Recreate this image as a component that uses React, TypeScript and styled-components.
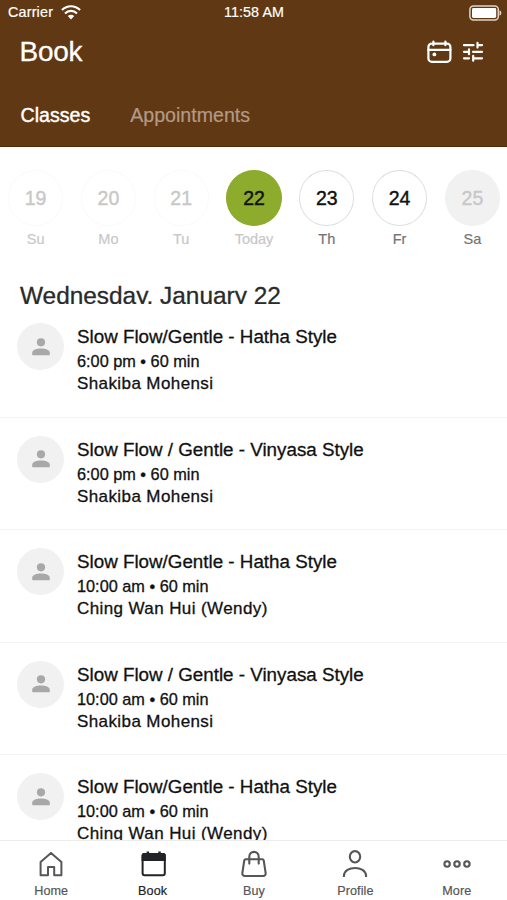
import React from "react";
import styled, { createGlobalStyle } from "styled-components";

const GlobalStyle = createGlobalStyle`
  * { box-sizing: border-box; }
  body { margin: 0; background: #fff; }
`;

const Screen = styled.div`
  width: 507px;
  height: 900px;
  display: flex;
  flex-direction: column;
  overflow: hidden;
  background: #fff;
  color: #111;
  font-family: "Liberation Sans", Arial, sans-serif;
  white-space: nowrap;
`;

const Header = styled.header`
  height: 147px;
  flex: none;
  background: #603813;
  border-bottom: 1px solid #4e2a0c;
  color: #fff;
`;

const StatusBar = styled.div`
  height: 25px;
  display: grid;
  grid-template-columns: 1fr auto 1fr;
  align-items: center;
  padding: 0 5px 0 8px;
  font-size: 14.3px;
  line-height: 25px;
  -webkit-text-stroke: 0.2px currentColor;
`;

const Carrier = styled.div`
  display: flex;
  align-items: center;
  gap: 8px;
  letter-spacing: 0.2px;
`;

const Clock = styled.div`
  padding-right: 2px;
  letter-spacing: 0.1px;
`;

const BatterySlot = styled.div`
  display: flex;
  justify-content: flex-end;
`;

const TitleBar = styled.div`
  height: 54px;
  display: flex;
  align-items: center;
  justify-content: space-between;
  padding: 0 23px 0 19.5px;
`;

const Title = styled.h1`
  margin: 0;
  font-size: 28px;
  line-height: 54px;
  font-weight: 400;
  letter-spacing: -0.3px;
  -webkit-text-stroke: 0.3px currentColor;
`;

const Actions = styled.div`
  display: flex;
  align-items: center;
  gap: 9px;
`;

const Tabs = styled.nav`
  display: flex;
  gap: 40px;
  padding: 24px 20px 0 20.5px;
`;

const Tab = styled.span<{ $active?: boolean }>`
  font-size: 19.6px;
  line-height: 25px;
  color: ${(p) => (p.$active ? "#fff" : "#b39a85")};
  -webkit-text-stroke: ${(p) => (p.$active ? "0.4px" : "0.2px")} currentColor;
`;

const DayStrip = styled.div`
  height: 128px;
  flex: none;
  display: grid;
  grid-template-columns: repeat(7, 72.8px);
  margin-left: -0.8px;
  padding-top: 23px;
`;

type DayState = "past" | "today" | "open" | "closed";

const dayStyles: Record<DayState, { bg: string; border: string; color: string; label: string }> = {
  past: { bg: "#fff", border: "#fafafa", color: "#c8c8c8", label: "#c8c8c8" },
  today: { bg: "#8dab2c", border: "#8dab2c", color: "#111", label: "#c8c8c8" },
  open: { bg: "#fff", border: "#dedede", color: "#111", label: "#747474" },
  closed: { bg: "#f1f1f1", border: "#f1f1f1", color: "#c8c8c8", label: "#747474" },
};

const Day = styled.div`
  display: flex;
  flex-direction: column;
  align-items: center;
`;

const DayNumber = styled.div<{ $state: DayState }>`
  width: 55.4px;
  height: 56px;
  display: flex;
  align-items: center;
  justify-content: center;
  border-radius: 50%;
  border: 1px solid ${(p) => dayStyles[p.$state].border};
  background: ${(p) => dayStyles[p.$state].bg};
  color: ${(p) => dayStyles[p.$state].color};
  font-size: 19.5px;
  -webkit-text-stroke: 0.4px currentColor;
`;

const DayLabel = styled.div<{ $state: DayState }>`
  margin-top: 4px;
  font-size: 14.5px;
  line-height: 18px;
  color: ${(p) => dayStyles[p.$state].label};
  -webkit-text-stroke: 0.2px currentColor;
`;

const DateHeading = styled.h2`
  height: 29px;
  flex: none;
  margin: 0 0 1px;
  padding: 5px 0 0 20px;
  overflow: hidden;
  font-size: 24.4px;
  line-height: 31px;
  font-weight: 400;
  color: #2a2a2a;
  -webkit-text-stroke: 0.3px currentColor;
`;

const ClassList = styled.main`
  flex: 1;
  min-height: 0;
  overflow: hidden;
`;

const ClassRow = styled.article`
  height: 112.5px;
  display: flex;
  gap: 13px;
  padding: 18.4px 17px 0;
  border-bottom: 1px solid #f3f3f3;
`;

const Avatar = styled.div`
  width: 47px;
  height: 47px;
  flex: none;
  display: flex;
  align-items: center;
  justify-content: center;
  border-radius: 50%;
  background: #f1f1f1;
`;

const ClassInfo = styled.div`
  display: flex;
  flex-direction: column;
  padding-top: 2px;
  color: #111;
  -webkit-text-stroke: 0.3px currentColor;
`;

const ClassName = styled.div`
  font-size: 18.8px;
  line-height: 24px;
`;

const ClassTime = styled.div`
  font-size: 16.3px;
  line-height: 24px;
`;

const Teacher = styled.div`
  font-size: 17px;
  line-height: 22px;
  letter-spacing: 0.4px;
`;

const BottomNav = styled.nav`
  height: 60px;
  flex: none;
  display: grid;
  grid-template-columns: repeat(5, 1fr);
  border-top: 1px solid #ececec;
  background: #fff;
`;

const NavItem = styled.div<{ $active?: boolean }>`
  display: flex;
  flex-direction: column;
  align-items: center;
  padding: 8px 0 0 1px;
  color: ${(p) => (p.$active ? "#222327" : "#555658")};
`;

const NavLabel = styled.span`
  margin-top: 4px;
  font-size: 12.6px;
  line-height: 16px;
  letter-spacing: 0.1px;
  -webkit-text-stroke: 0.2px currentColor;
`;

const WifiIcon = () => (
  <svg width="20" height="15" viewBox="0 0 20 15" fill="none" stroke="#fff" strokeWidth="2.1">
    <path d="M0.9 5.1C6.2-0.1 13.8-0.1 19.1 5.1" />
    <path d="M4 8.4C7.4 5 12.6 5 16 8.4" />
    <path d="M6.8 11.1Q10 8.2 13.2 11.1L10 14.4Z" fill="#fff" stroke="none" />
  </svg>
);

const BatteryIcon = () => (
  <svg width="33" height="16" viewBox="0 0 33 16">
    <rect x="0.9" y="0.9" width="28.4" height="14.2" rx="3.5" fill="none" stroke="#e3d3c5" strokeWidth="1.5" />
    <rect x="3" y="3" width="24.2" height="10" rx="1.4" fill="#fff" />
    <path d="M30.5 5.2Q32.4 6 32.4 8T30.5 10.8Z" fill="#e3d3c5" />
  </svg>
);

const CalendarIcon = () => (
  <svg width="26" height="24" viewBox="0.6 0 26 24" fill="none" stroke="#fff" strokeWidth="2.2" strokeLinecap="round">
    <rect x="2" y="3.6" width="22" height="18.2" rx="3.4" />
    <path d="M2 9.8H24M7 1.6V5.2M19 1.6V5.2" />
    <circle cx="8" cy="14.4" r="1.9" fill="#fff" stroke="none" />
  </svg>
);

const TuneIcon = () => (
  <svg width="22" height="22" viewBox="0 0 22 22" fill="none" stroke="#fff" strokeWidth="2.2" strokeLinecap="round">
    <path d="M2 4.2H11.5M15.5 1.8V6.6M16 4.2H20M2 10.8H5.5M7 8.4V13.2M11 10.8H20M2 17.3H7M11.2 14.9V19.7M12 17.3H20" />
  </svg>
);

const PersonIcon = () => (
  <svg width="20" height="20" viewBox="0 0 20 20" fill="#a8a8a8">
    <circle cx="10" cy="5.3" r="4.1" />
    <path d="M1.2 17.4V15.7C1.2 12.9 5.8 11.5 10 11.5S18.8 12.9 18.8 15.7V17.4Q18.8 18.2 18 18.2H2Q1.2 18.2 1.2 17.4Z" />
  </svg>
);

const HomeIcon = () => (
  <svg width="30" height="30" viewBox="0 0 30 30" fill="none" stroke="currentColor" strokeWidth="2" strokeLinejoin="round">
    <path d="M4.6 12.9L15 3.9L25.4 12.9V26.3H18.2V18H12V26.3H4.6Z" />
  </svg>
);

const BookIcon = () => (
  <svg width="30" height="30" viewBox="-0.6 0 30 30">
    <rect x="4" y="5" width="22.2" height="21.3" rx="2" fill="none" stroke="currentColor" strokeWidth="2" />
    <path d="M3 6.5Q3 4 5.5 4H8V2.5H10.5V4H19.7V2.5H22.2V4H24.7Q27.2 4 27.2 6.5V12H3Z" fill="currentColor" />
  </svg>
);

const BagIcon = () => (
  <svg width="30" height="30" viewBox="0 0 30 30" fill="none" stroke="currentColor" strokeWidth="2.1" strokeLinecap="round" strokeLinejoin="round">
    <path d="M6.7 10.2H23.3Q24.5 10.2 24.7 11.4L26.6 23.7Q27 27 24 27H6Q3 27 3.4 23.7L5.3 11.4Q5.5 10.2 6.7 10.2Z" />
    <path d="M10.3 14.6V7.8C10.3 1.2 19.7 1.2 19.7 7.8V14.6" />
  </svg>
);

const ProfileIcon = () => (
  <svg width="30" height="30" viewBox="0 0 30 30" fill="none" stroke="currentColor" strokeWidth="2.1">
    <ellipse cx="15" cy="7.8" rx="5.2" ry="5.7" />
    <path d="M3.9 27.9V26.8C4.4 16.4 25.6 16.4 26.1 26.8V27.9" />
  </svg>
);

const MoreIcon = () => (
  <svg width="30" height="30" viewBox="0 0 30 30" fill="none" stroke="currentColor" strokeWidth="2.1">
    <circle cx="5.1" cy="15" r="2.7" />
    <circle cx="15" cy="15" r="2.7" />
    <circle cx="24.9" cy="15" r="2.7" />
  </svg>
);

const days: { num: number; label: string; state: DayState }[] = [
  { num: 19, label: "Su", state: "past" },
  { num: 20, label: "Mo", state: "past" },
  { num: 21, label: "Tu", state: "past" },
  { num: 22, label: "Today", state: "today" },
  { num: 23, label: "Th", state: "open" },
  { num: 24, label: "Fr", state: "open" },
  { num: 25, label: "Sa", state: "closed" },
];

const HATHA = "Slow Flow/Gentle - Hatha Style";
const VINYASA = "Slow Flow / Gentle - Vinyasa Style";

const classes = [
  { name: HATHA, time: "6:00 pm", teacher: "Shakiba Mohensi" },
  { name: VINYASA, time: "6:00 pm", teacher: "Shakiba Mohensi" },
  { name: HATHA, time: "10:00 am", teacher: "Ching Wan Hui (Wendy)" },
  { name: VINYASA, time: "10:00 am", teacher: "Shakiba Mohensi" },
  { name: HATHA, time: "10:00 am", teacher: "Ching Wan Hui (Wendy)" },
];

const navItems = [
  { label: "Home", Icon: HomeIcon },
  { label: "Book", Icon: BookIcon, active: true },
  { label: "Buy", Icon: BagIcon },
  { label: "Profile", Icon: ProfileIcon },
  { label: "More", Icon: MoreIcon },
];

export default function App() {
  return (
    <>
      <GlobalStyle />
      <Screen>
        <Header>
          <StatusBar>
            <Carrier>
              Carrier
              <WifiIcon />
            </Carrier>
            <Clock>11:58 AM</Clock>
            <BatterySlot>
              <BatteryIcon />
            </BatterySlot>
          </StatusBar>
          <TitleBar>
            <Title>Book</Title>
            <Actions>
              <CalendarIcon />
              <TuneIcon />
            </Actions>
          </TitleBar>
          <Tabs>
            <Tab $active>Classes</Tab>
            <Tab>Appointments</Tab>
          </Tabs>
        </Header>
        <DayStrip>
          {days.map((d) => (
            <Day key={d.num}>
              <DayNumber $state={d.state}>{d.num}</DayNumber>
              <DayLabel $state={d.state}>{d.label}</DayLabel>
            </Day>
          ))}
        </DayStrip>
        <DateHeading>Wednesday, January 22</DateHeading>
        <ClassList>
          {classes.map((c, i) => (
            <ClassRow key={i}>
              <Avatar>
                <PersonIcon />
              </Avatar>
              <ClassInfo>
                <ClassName>{c.name}</ClassName>
                <ClassTime>{c.time} • 60 min</ClassTime>
                <Teacher>{c.teacher}</Teacher>
              </ClassInfo>
            </ClassRow>
          ))}
        </ClassList>
        <BottomNav>
          {navItems.map(({ label, Icon, active }) => (
            <NavItem key={label} $active={active}>
              <Icon />
              <NavLabel>{label}</NavLabel>
            </NavItem>
          ))}
        </BottomNav>
      </Screen>
    </>
  );
}
